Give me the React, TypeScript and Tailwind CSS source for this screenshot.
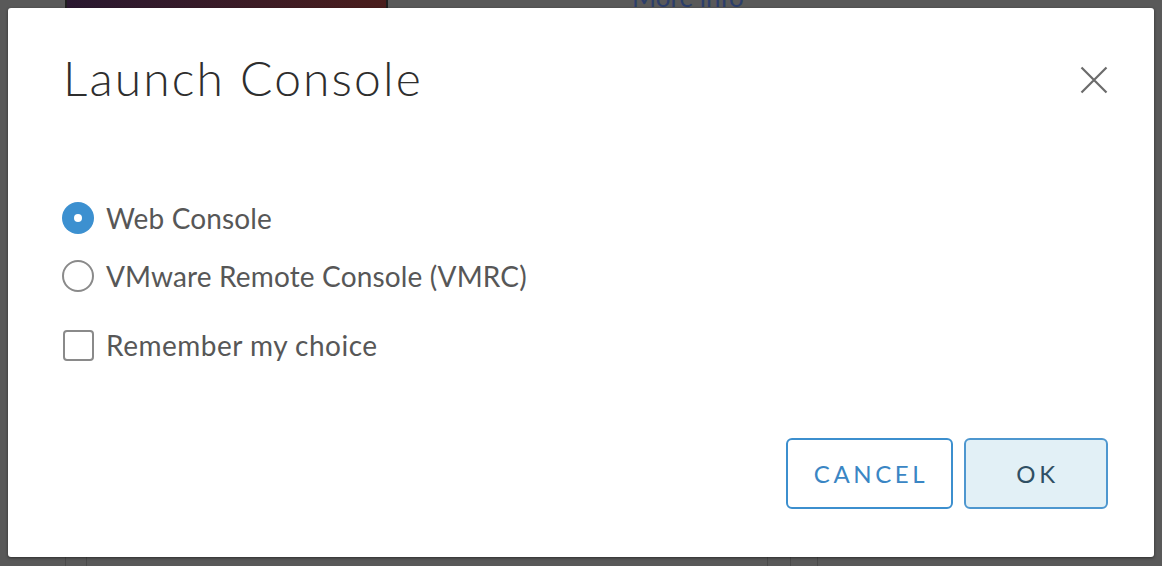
import { useState } from 'react';

const FONT = "font-['Lato','Liberation_Sans',sans-serif]";

type Option = { id: string; label: string };

const OPTIONS: Option[] = [
  { id: 'web', label: 'Web Console' },
  { id: 'vmrc', label: 'VMware Remote Console (VMRC)' },
];

const CloseIcon = () => (
  <svg width="28" height="28" viewBox="0 0 28 28" className="mt-[4px]">
    <path d="M1.5 1.5 L26.5 26.5 M26.5 1.5 L1.5 26.5" stroke="#6b6b6b" strokeWidth="2.2" fill="none" />
  </svg>
);

const Radio = ({ checked }: { checked: boolean }) =>
  checked ? (
    <span className="flex h-[32px] w-[32px] shrink-0 items-center justify-center rounded-full bg-[#3c90d0]">
      <span className="h-[8px] w-[8px] rounded-full bg-white" />
    </span>
  ) : (
    <span className="h-[32px] w-[32px] shrink-0 rounded-full border-2 border-[#8a8a8a] bg-white" />
  );

export default function App() {
  const [choice, setChoice] = useState('web');
  const [remember, setRemember] = useState(false);

  return (
    <div className={`relative h-[566px] w-[1162px] overflow-hidden bg-[#595959] ${FONT}`}>
      {/* page behind the overlay */}
      <div className="absolute left-[65px] top-0 h-[8px] w-[323px] border-x-2 border-[#1e1e1e] bg-gradient-to-r from-[#2a1830] to-[#4a1d1c]" />
      <div className="absolute left-[632px] top-[-16px] text-[26px] leading-[26px] text-[#2c3e6a]">More info</div>
      <div className="absolute bottom-0 left-[65px] h-[9px] w-[22px] border-x border-[#4a4a4a]" />
      <div className="absolute bottom-0 left-[767px] h-[9px] w-[51px] border-x border-[#4a4a4a]" />
      <div className="absolute bottom-0 left-[790px] h-[9px] w-px bg-[#4a4a4a]" />

      {/* modal */}
      <div className="relative ml-[8px] mt-[8px] flex h-[549px] w-[1146px] flex-col rounded-[3px] bg-white pl-[55px] pr-[46px] shadow-[0_1px_3px_rgba(0,0,0,0.5)]">
        <div className="flex items-center justify-between pt-[46px]">
          <h1 className="text-[48px] font-light leading-[48px] tracking-[2.1px] text-[#2e2e2e]">Launch Console</h1>
          <CloseIcon />
        </div>

        <div className="mt-[100px] flex flex-col gap-[26px]">
          {OPTIONS.map((opt) => (
            <label
              key={opt.id}
              className="-ml-[1px] flex cursor-pointer items-center gap-[12px]"
              onClick={() => setChoice(opt.id)}
            >
              <Radio checked={choice === opt.id} />
              <span className="text-[28px] leading-[32px] tracking-[0.15px] text-[#575757]">{opt.label}</span>
            </label>
          ))}
        </div>

        <label
          className="mt-[37px] flex cursor-pointer items-center gap-[12px]"
          onClick={() => setRemember(!remember)}
        >
          <span className="h-[31px] w-[31px] shrink-0 rounded-[4px] border-2 border-[#8a8a8a] bg-white" />
          <span className="text-[28px] leading-[32px] tracking-[0.5px] text-[#575757]">Remember my choice</span>
        </label>

        <div className="mt-auto flex justify-end gap-[11px] pb-[48px]">
          <button className="h-[71px] w-[167px] rounded-[6px] border-2 border-[#3c8fce] bg-white pl-[3px] text-[24px] tracking-[3.6px] text-[#3a86c4]">
            CANCEL
          </button>
          <button className="h-[71px] w-[144px] rounded-[6px] border-2 border-[#4e97cf] bg-[#e2f0f6] pl-[3px] text-[24px] tracking-[3.6px] text-[#2f4f63]">
            OK
          </button>
        </div>
      </div>
    </div>
  );
}
